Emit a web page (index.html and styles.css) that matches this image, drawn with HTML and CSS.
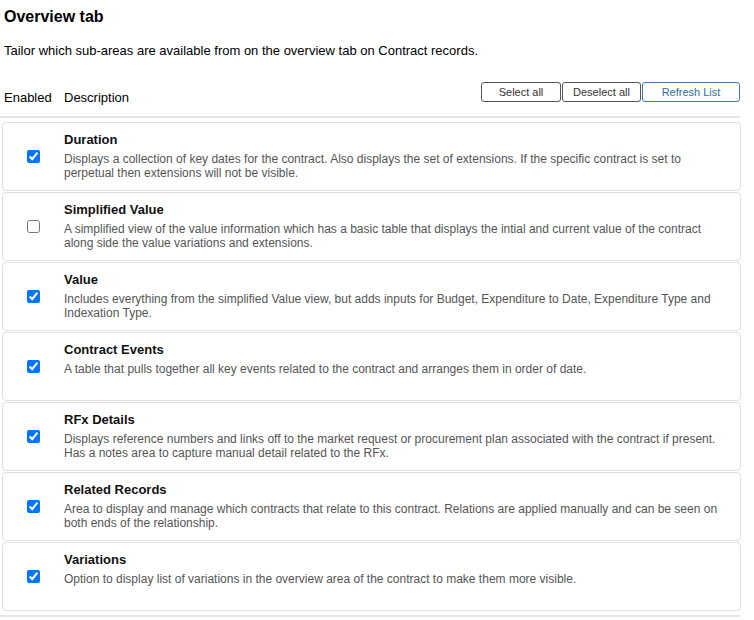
FILE: index.html
```html
<!DOCTYPE html>
<html lang="en">
<head>
    <meta charset="UTF-8">
    <meta name="viewport" content="width=device-width, initial-scale=1.0">
    <title>Overview tab</title>
    <link rel="stylesheet" href="styles.css">
</head>
<body>
    <div class="page">
        <h2 class="page-title">Overview tab</h2>
        <p class="page-intro">Tailor which sub-areas are available from on the overview tab on Contract records.</p>

        <div class="list-header">
            <div class="col-labels">
                <span class="col-enabled">Enabled</span>
                <span>Description</span>
            </div>
            <div class="actions">
                <button class="btn btn-select">Select all</button>
                <button class="btn btn-deselect">Deselect all</button>
                <button class="btn btn-refresh">Refresh List</button>
            </div>
        </div>

        <div class="area-list" id="area-list">
            <div class="area">
                <div class="area-check"><input type="checkbox" checked></div>
                <div class="area-body">
                    <div class="area-name">Duration</div>
                    <div class="area-desc">Displays a collection of key dates for the contract. Also displays the set of extensions. If the specific contract is set to perpetual then extensions will not be visible.</div>
                </div>
            </div>
            <div class="area">
                <div class="area-check"><input type="checkbox"></div>
                <div class="area-body">
                    <div class="area-name">Simplified Value</div>
                    <div class="area-desc">A simplified view of the value information which has a basic table that displays the intial and current value of the contract along side the value variations and extensions.</div>
                </div>
            </div>
            <div class="area">
                <div class="area-check"><input type="checkbox" checked></div>
                <div class="area-body">
                    <div class="area-name">Value</div>
                    <div class="area-desc">Includes everything from the simplified Value view, but adds inputs for Budget, Expenditure to Date, Expenditure Type and Indexation Type.</div>
                </div>
            </div>
            <div class="area">
                <div class="area-check"><input type="checkbox" checked></div>
                <div class="area-body">
                    <div class="area-name">Contract Events</div>
                    <div class="area-desc">A table that pulls together all key events related to the contract and arranges them in order of date.</div>
                </div>
            </div>
            <div class="area">
                <div class="area-check"><input type="checkbox" checked></div>
                <div class="area-body">
                    <div class="area-name">RFx Details</div>
                    <div class="area-desc">Displays reference numbers and links off to the market request or procurement plan associated with the contract if present. Has a notes area to capture manual detail related to the RFx.</div>
                </div>
            </div>
            <div class="area">
                <div class="area-check"><input type="checkbox" checked></div>
                <div class="area-body">
                    <div class="area-name">Related Records</div>
                    <div class="area-desc">Area to display and manage which contracts that relate to this contract. Relations are applied manually and can be seen on both ends of the relationship.</div>
                </div>
            </div>
            <div class="area">
                <div class="area-check"><input type="checkbox" checked></div>
                <div class="area-body">
                    <div class="area-name">Variations</div>
                    <div class="area-desc">Option to display list of variations in the overview area of the contract to make them more visible.</div>
                </div>
            </div>
        </div>
    </div>
    <script>
        // Select all / Deselect all toggle every checkbox in the list
        function setAll(value) {
            document.querySelectorAll('#area-list input[type=checkbox]').forEach(cb => {
                cb.checked = value;
            });
        }
        document.querySelector('.btn-select').addEventListener('click', () => setAll(true));
        document.querySelector('.btn-deselect').addEventListener('click', () => setAll(false));
    </script>
</body>
</html>
```

FILE: styles.css
```css
* {
    margin: 0;
    padding: 0;
    box-sizing: border-box;
}
body {
    font-family: "Liberation Sans", Arial, sans-serif;
    background: white;
    color: #000;
}
.page {
    width: 741px;
}
.page-title {
    font-size: 16px;
    font-weight: bold;
    line-height: 18px;
    margin: 8px 0 0 4px;
}
.page-intro {
    font-size: 13px;
    line-height: 16px;
    margin: 17px 0 0 4px;
}
.list-header {
    display: flex;
    justify-content: space-between;
    align-items: flex-start;
    margin-top: 23px;
    margin-right: 1px;
    padding-bottom: 10px;
    border-bottom: 2px solid #e6e6e6;
}
.col-labels {
    display: flex;
    font-size: 13px;
    line-height: 16px;
    margin-top: 8px;
    padding-left: 4px;
}
.col-enabled {
    width: 60px;
}
.actions {
    display: flex;
    gap: 1px;
}
.btn {
    height: 20px;
    font-family: "Liberation Sans", Arial, sans-serif;
    font-size: 11px;
    color: #333;
    background: white;
    border: 1px solid #555;
    border-radius: 3px;
    cursor: pointer;
}
.btn-select {
    width: 80px;
}
.btn-deselect {
    width: 79px;
}
.btn-refresh {
    width: 98px;
    color: #2f6ea6;
    border-color: #3d7cb3;
}
.area-list {
    margin-top: 4px;
    padding-left: 2px;
}
.area {
    display: flex;
    align-items: center;
    height: 69px;
    margin-bottom: 1px;
    border: 1px solid #e0e0e0;
    border-radius: 4px;
}
.area-check {
    width: 61px;
    display: flex;
    justify-content: center;
    flex-shrink: 0;
}
.area-check input {
    width: 13px;
    height: 13px;
    margin: 0;
}
.area-body {
    align-self: flex-start;
    padding: 9px 16px 0 0;
}
.area-name {
    font-size: 13px;
    font-weight: bold;
    line-height: 16px;
    color: #111;
}
.area-desc {
    font-size: 12px;
    line-height: 14px;
    color: #555;
    margin-top: 4px;
}
.page::after {
    content: "";
    display: block;
    height: 2px;
    margin-top: 4px;
    margin-right: 1px;
    background: #e6e6e6;
}
```
